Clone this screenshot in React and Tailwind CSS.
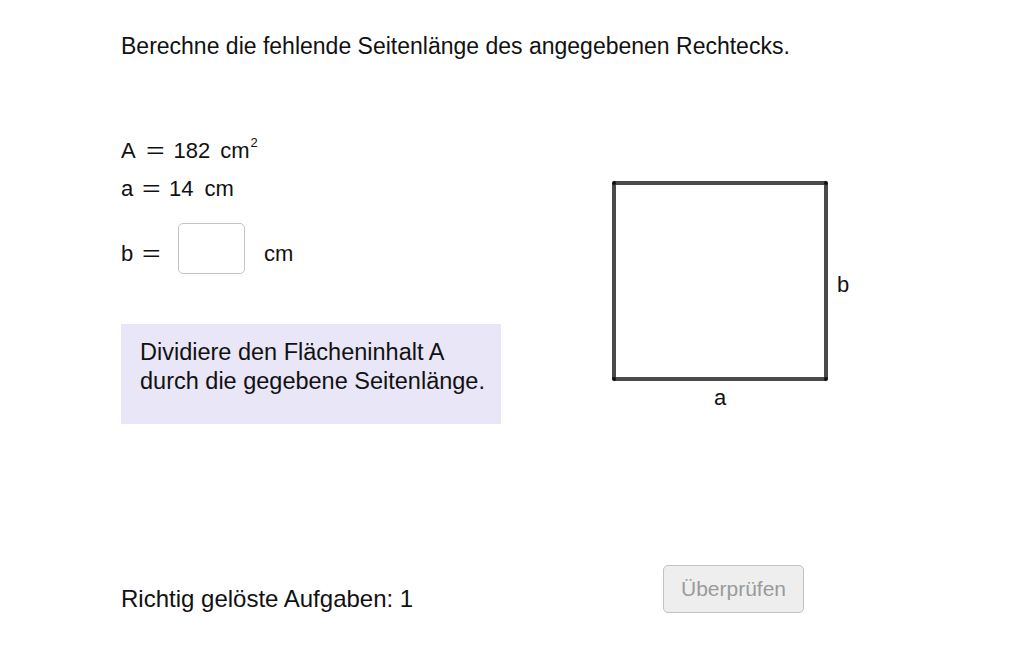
import React from "react";

const Rectangle = () => (
    <svg width="260" height="240" viewBox="0 0 260 240" className="block">
        {/* sides of the rectangle, origin at (600,170) */}
        <g stroke="#4a4a4a" strokeWidth="4" strokeLinecap="butt">
            <line x1="14" y1="13" x2="226" y2="13" />
            <line x1="14" y1="209" x2="226" y2="209" />
            <line x1="14" y1="13" x2="14" y2="209" />
            <line x1="226" y1="13" x2="226" y2="209" />
        </g>
        <g fill="#111">
            <circle cx="14" cy="13" r="2" />
            <circle cx="226" cy="13" r="2" />
            <circle cx="14" cy="209" r="2" />
            <circle cx="226" cy="209" r="2" />
        </g>
        <text x="237" y="122" fontSize="22" fontFamily="Liberation Sans, sans-serif" fill="#111">b</text>
        <text x="114" y="235" fontSize="22" fontFamily="Liberation Sans, sans-serif" fill="#111">a</text>
    </svg>
);

const Eq = ({ className = "" }) => (
    <span className={"inline-block scale-x-[1.45] " + className}>=</span>
);

const App = () => {
    return (
        <div className="w-[1032px] h-[645px] bg-white text-[#111] font-['Liberation_Sans',sans-serif] overflow-hidden">
            <div className="pl-[121px] pt-[32px]">
                <p className="text-[23px] leading-[28px]">
                    Berechne die fehlende Seitenlänge des angegebenen Rechtecks.
                </p>

                <div className="flex mt-[70px]">
                    <div className="w-[479px] shrink-0">
                        <div className="mt-[5px] h-[30px] flex items-center text-[22px]">
                            <span>A</span>
                            <Eq className="ml-[13px] mr-[12px]" />
                            <span>182</span>
                            <span className="ml-[10px]">cm</span>
                            <span className="text-[13px] self-start -mt-[2px] ml-[1px]">2</span>
                        </div>
                        <div className="mt-[8px] h-[30px] flex items-center text-[22px]">
                            <span>a</span>
                            <Eq className="ml-[12px] mr-[11px]" />
                            <span>14</span>
                            <span className="ml-[11px]">cm</span>
                        </div>
                        <div className="mt-[20px] h-[51px] flex items-center text-[22px]">
                            <span className="mt-[9px]">b</span>
                            <Eq className="ml-[12px] mt-[9px]" />
                            <input
                                type="text"
                                className="ml-[20px] w-[67px] h-[51px] border border-[#c4c4c4] rounded-[5px] bg-white outline-none"
                            />
                            <span className="ml-[19px] mt-[9px]">cm</span>
                        </div>
                        <div className="mt-[50px] w-[380px] h-[100px] bg-[#e8e6f7] pl-[19px] pt-[14px] text-[23.5px] leading-[29px]">
                            <p>Dividiere den Flächeninhalt A</p>
                            <p>durch die gegebene Seitenlänge.</p>
                        </div>
                    </div>
                    <div className="mt-[40px]">
                        <Rectangle />
                    </div>
                </div>
            </div>

            <div className="flex items-start h-[48px] mt-[141px] pl-[121px]">
                <p className="text-[24px] leading-[28px] mt-[20px] w-[542px] shrink-0">Richtig gelöste Aufgaben: 1</p>
                <button
                    disabled
                    className="w-[141px] h-[48px] bg-[#eeeeee] border border-[#c2c2c2] rounded-[5px] text-[21px] text-[#9a9a9a]"
                >
                    Überprüfen
                </button>
            </div>
        </div>
    );
};

export default App;
